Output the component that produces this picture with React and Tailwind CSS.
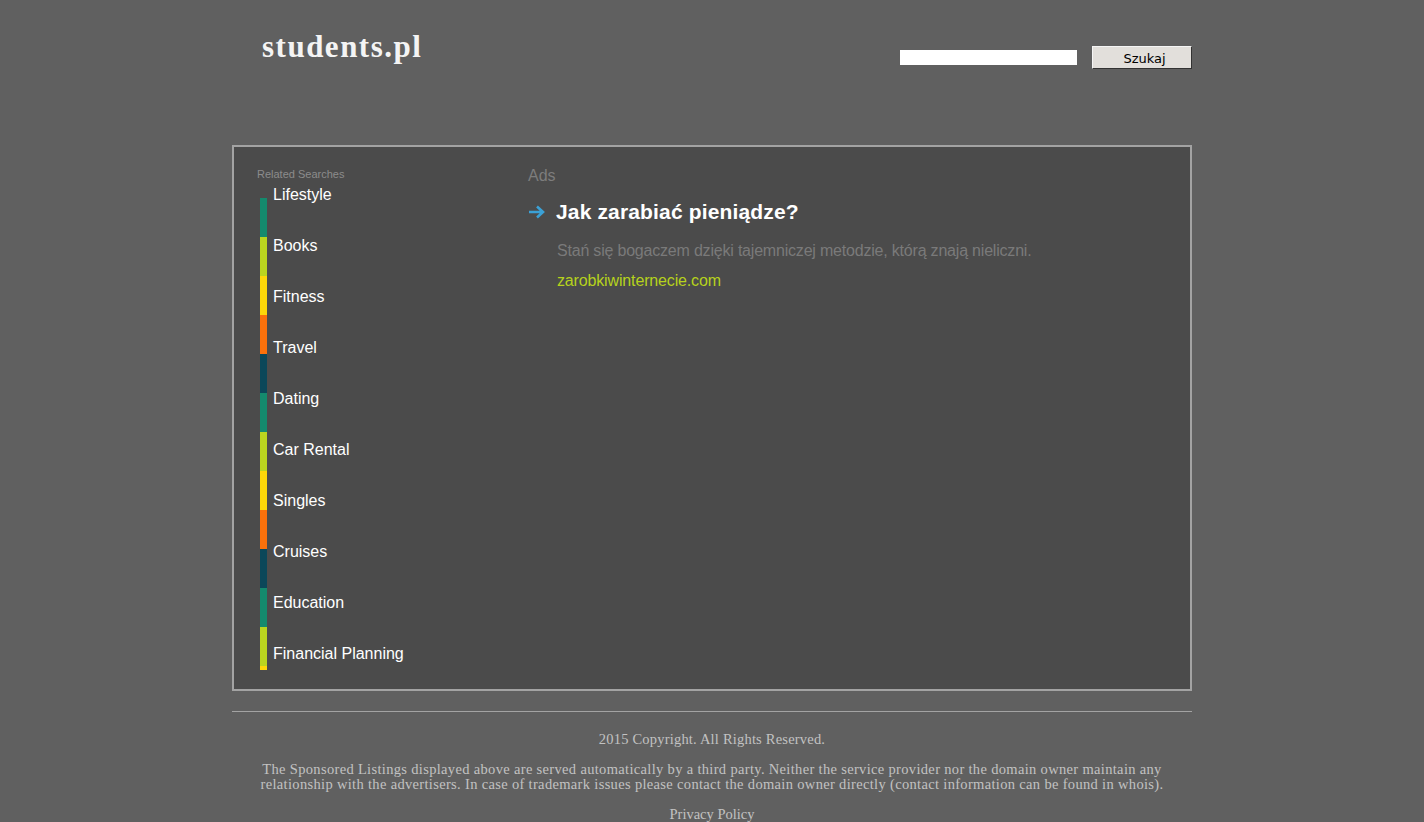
import React from 'react';

const searches = [
  'Lifestyle',
  'Books',
  'Fitness',
  'Travel',
  'Dating',
  'Car Rental',
  'Singles',
  'Cruises',
  'Education',
  'Financial Planning',
];

const stripes = [
  'bg-[#148a6d]',
  'bg-[#bad51f]',
  'bg-[#fdd709]',
  'bg-[#fb710b]',
  'bg-[#0b4759]',
  'bg-[#148a6d]',
  'bg-[#bad51f]',
  'bg-[#fdd709]',
  'bg-[#fb710b]',
  'bg-[#0b4759]',
  'bg-[#148a6d]',
  'bg-[#bad51f]',
];

export default function App() {
  return (
    <div className="min-h-[822px] bg-[#606060] font-['Liberation_Sans',Arial,sans-serif]">
      <div className="w-[960px] mx-auto">
        {/* header */}
        <div className="flex justify-between h-[145px]">
          <div className="pl-[30px] pt-[29px] font-['Liberation_Serif',serif] font-bold text-[31px] leading-[36px] text-[#f4f4f4] tracking-[1.5px]">
            students.pl
          </div>
          <div className="flex items-start pt-[46px] gap-[15px]">
            <input
              type="text"
              className="mt-[4px] w-[177px] h-[15px] bg-white border-0 outline-none"
            />
            <button className="w-[100px] h-[23px] bg-[#e2dfdb] border border-t-[#f5f5f5] border-l-[#f5f5f5] border-r-[#333] border-b-[#333] font-['DejaVu_Sans',Verdana,sans-serif] text-[13px] text-black leading-none pt-[2px] pl-[5px]">
              Szukaj
            </button>
          </div>
        </div>

        {/* main panel */}
        <div className="h-[546px] border-2 border-[#a3a3a3] bg-[#4b4b4b] flex">
          <div className="w-[294px] pl-[23px] pt-[21px]">
            <div className="text-[11px] leading-[12px] text-[#8c8c8c]">Related Searches</div>
            <div className="flex mt-[6px] pl-[3px]">
              <div className="flex flex-col w-[7px] pt-[12px]">
                {stripes.map((c, i) => (
                  <div key={i} className={`h-[39px] ${c}`} />
                ))}
                <div className="h-[4px] bg-[#fdd709]" />
              </div>
              <ul className="pl-[6px]">
                {searches.map((s) => (
                  <li key={s} className="h-[51px] text-[16px] leading-[18px] text-white">
                    {s}
                  </li>
                ))}
              </ul>
            </div>
          </div>
          <div className="pt-[20px]">
            <div className="text-[16px] leading-[18px] text-[#7d7d7d]">Ads</div>
            <div className="flex items-center mt-[15px]">
              <svg width="18" height="14" viewBox="0 0 18 14" className="mr-[10px]">
                <path d="M1 7h14M9 1.5L15 7l-6 5.5" fill="none" stroke="#3ba1d6" strokeWidth="2.6" />
              </svg>
              <div className="text-[21px] leading-[24px] font-bold text-white tracking-[0.15px]">Jak zarabiać pieniądze?</div>
            </div>
            <div className="pl-[29px] mt-[18px] text-[16px] leading-[18px] text-[#7a7a7a] tracking-[-0.2px]">
              Stań się bogaczem dzięki tajemniczej metodzie, którą znają nieliczni.
            </div>
            <div className="pl-[29px] mt-[12px] text-[16px] leading-[18px] text-[#b6d21c] tracking-[-0.15px]">
              zarobkiwinternecie.com
            </div>
          </div>
        </div>

        {/* footer */}
        <div className="mt-[20px] border-t border-[#a3a3a3] pt-[20px] pb-[4px] font-['Liberation_Serif',serif] text-[14.5px] leading-[15px] text-[#c2c2c2] text-center">
          <p className="tracking-[0.2px]">2015 Copyright. All Rights Reserved.</p>
          <p className="mt-[15px] tracking-[0.33px]">
            The Sponsored Listings displayed above are served automatically by a third party. Neither the service provider nor the domain owner maintain any
            <br />
            relationship with the advertisers. In case of trademark issues please contact the domain owner directly (contact information can be found in whois).
          </p>
          <p className="mt-[15px]">Privacy Policy</p>
        </div>
      </div>
    </div>
  );
}
